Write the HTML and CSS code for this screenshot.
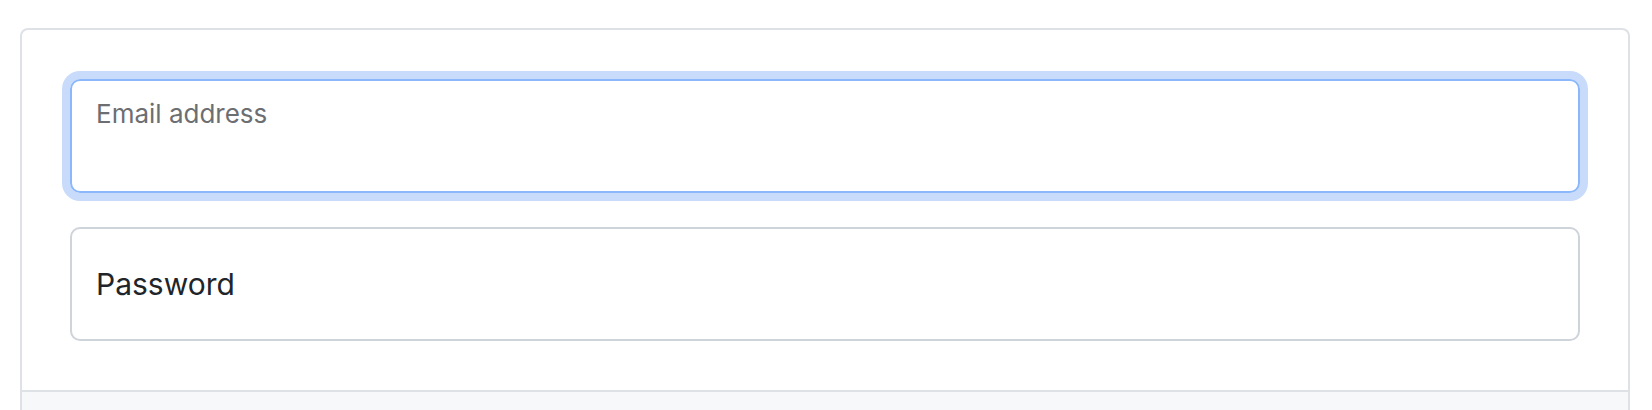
FILE: index.html
```html
<!DOCTYPE html>
<html>
<head>
  <meta name="viewport" content="width=device-width, initial-scale=1">
  <title>Sign in</title>
  <link rel="stylesheet" href="styles.css">
</head>
<body>
  <div class="page">
    <div class="card">
      <div class="card-body">
        <div class="field field-focus">
          <div class="field-label floated">Email address</div>
        </div>
        <div class="field">
          <div class="field-label">Password</div>
        </div>
      </div>
      <div class="card-footer"></div>
    </div>
  </div>
</body>
</html>
```

FILE: styles.css
```css
body {
  margin: 0;
  background: #fff;
  font-family: Inter, "Noto Sans", sans-serif;
  color: #212529;
}

.page {
  padding: 28px 22px 0 20px;
}

.card {
  border: 2px solid #dee2e6;
  border-bottom: none;
  border-radius: 8px 8px 0 0;
  background: #fff;
}

.card-body {
  padding: 49px 48px;
  border-bottom: 2px solid #dee2e6;
  display: flex;
  flex-direction: column;
  gap: 34px;
}

.card-footer {
  height: 18px;
  background: #f7f8f9;
}

.field {
  box-sizing: border-box;
  height: 114px;
  border: 2px solid #ced4da;
  border-radius: 10px;
  padding: 0 24px;
  display: flex;
  align-items: center;
}

.field-focus {
  border-color: #8bb8fb;
  box-shadow: 0 0 0 8px #c9dbfb;
  align-items: flex-start;
  padding-top: 17px;
}

.field-label {
  font-size: 30px;
  line-height: 1.2;
  color: #212529;
}

.field-label.floated {
  font-size: 26px;
  color: #6c6e72;
}
```
